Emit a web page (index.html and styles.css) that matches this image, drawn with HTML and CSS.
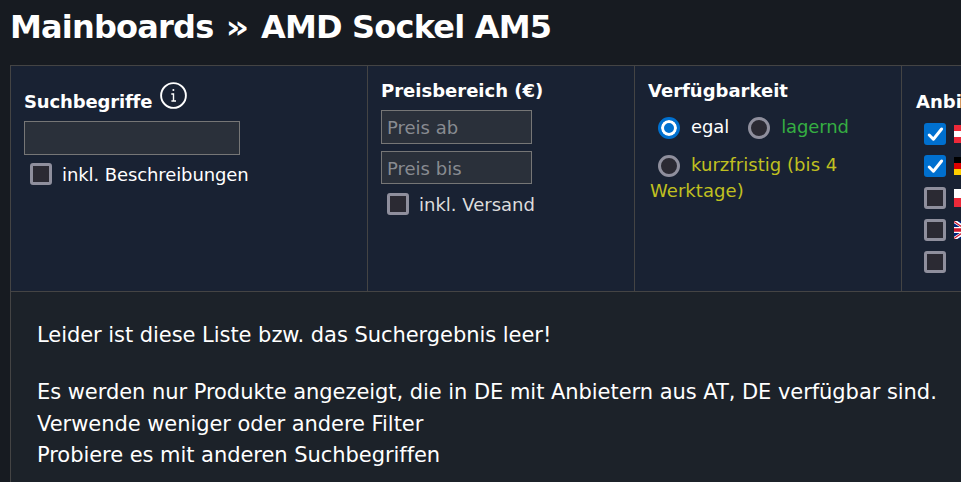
FILE: index.html
```html
<!DOCTYPE html>
<html lang="de">
<head>
    <meta charset="UTF-8">
    <meta name="viewport" content="width=device-width, initial-scale=1.0">
    <title>Mainboards » AMD Sockel AM5</title>
    <link rel="stylesheet" href="styles.css">
</head>
<body>
    <h1>Mainboards <span class="sep">»</span> AMD Sockel AM5</h1>
    <div id="list">
        <form id="filters">
            <div class="filter search">
                <h2>Suchbegriffe
                    <svg class="info" viewBox="0 0 27 27" width="27" height="27">
                        <circle cx="13.5" cy="13.5" r="12.4" fill="none" stroke="#fff" stroke-width="1.9"/>
                        <circle cx="13.4" cy="8" r="1" fill="#fff"/>
                        <path d="M11.3 12h2.2v6.7M11.4 19h4.6" fill="none" stroke="#fff" stroke-width="1.4"/>
                    </svg>
                </h2>
                <input type="text" class="field">
                <label class="row"><input type="checkbox"><span>inkl. Beschreibungen</span></label>
            </div>
            <div class="filter price">
                <h2>Preisbereich (€)</h2>
                <input type="text" class="field" placeholder="Preis ab">
                <input type="text" class="field" placeholder="Preis bis">
                <label class="row muted"><input type="checkbox"><span>inkl. Versand</span></label>
            </div>
            <div class="filter stock">
                <h2>Verfügbarkeit</h2>
                <div class="options">
                    <label class="any"><input type="radio" name="v" checked>egal</label>
                    <label class="green"><input type="radio" name="v">lagernd</label>
                </div>
                <label class="yellow"><input type="radio" name="v">kurzfristig (bis 4 Werktage)</label>
            </div>
            <div class="filter vendors">
                <h2>Anbieter</h2>
                <label class="country"><input type="checkbox" checked>
                    <svg class="flag" viewBox="0 0 27 18"><path fill="#ed2939" d="M0 0h27v18H0z"/><path fill="#fff" d="M0 6h27v6H0z"/></svg>
                </label>
                <label class="country"><input type="checkbox" checked>
                    <svg class="flag" viewBox="0 0 27 18"><path d="M0 0h27v6H0z"/><path fill="#d00" d="M0 6h27v6H0z"/><path fill="#ffce00" d="M0 12h27v6H0z"/></svg>
                </label>
                <label class="country"><input type="checkbox">
                    <svg class="flag" viewBox="0 0 27 18"><path fill="#fff" d="M0 0h27v9H0z"/><path fill="#ed2939" d="M0 9h27v9H0z"/></svg>
                </label>
                <label class="country"><input type="checkbox">
                    <svg class="flag" viewBox="0 0 27 18">
                        <path fill="#00247d" d="M0 0h27v18H0z"/>
                        <path stroke="#fff" stroke-width="3.6" d="M0 0l27 18M27 0L0 18"/>
                        <path stroke="#cf142b" stroke-width="1.2" d="M0 .6l27 18M27-.6L0 17.4"/>
                        <path stroke="#fff" stroke-width="6" d="M13.5 0v18M0 9h27"/>
                        <path stroke="#cf142b" stroke-width="3.6" d="M13.5 0v18M0 9h27"/>
                    </svg>
                </label>
                <label class="country"><input type="checkbox"></label>
            </div>
        </form>
        <div id="empty">
            <p>Leider ist diese Liste bzw. das Suchergebnis leer!</p>
            <p>Es werden nur Produkte angezeigt, die in DE mit Anbietern aus AT, DE verfügbar sind.<br>
            Verwende weniger oder andere Filter<br>
            Probiere es mit anderen Suchbegriffen</p>
        </div>
    </div>
</body>
</html>
```
FILE: styles.css
```css
* {
    box-sizing: border-box;
}

body {
    margin: 0;
    padding: 0 0 0 10px;
    height: 482px;
    overflow: hidden;
    background-color: #171b21;
    color: #fff;
    font-family: Verdana, "DejaVu Sans", sans-serif;
    font-size: 18px;
}

h1 {
    margin: 0;
    padding-top: 7px;
    height: 65px;
    font-size: 32px;
    line-height: 40px;
    letter-spacing: -0.8px;
    white-space: nowrap;
}

.sep {
    display: inline-block;
    margin: 0 4px 0 3px;
    transform: scaleX(1.15);
}

h2 {
    margin: 0;
    font-size: 18px;
    line-height: 26px;
    white-space: nowrap;
}

#list {
    height: 417px;
    border: 1px solid #444;
    border-width: 1px 0 0 1px;
    background-color: #1c2229;
    overflow: hidden;
}

#filters {
    display: grid;
    grid-template-columns: 357px 267px 267px 267px;
    width: 1158px;
    height: 226px;
    background-color: #192233;
    border-bottom: 1px solid #444;
}

.filter {
    padding: 12px 13px 0;
    border-right: 1px solid #444;
}

.field {
    display: block;
    width: 151px;
    height: 34px;
    padding: 1px 5px;
    border: 1px solid #767676;
    background-color: #2a303a;
    color: #fff;
    font: inherit;
}

.field::placeholder {
    color: #888b91;
}

.row {
    display: flex;
    align-items: center;
    gap: 10px;
    padding-left: 6px;
    line-height: 22px;
}

.row span {
    padding-top: 1px;
    line-height: 21px;
}

.muted {
    color: #ddd;
}

input[type="checkbox"],
input[type="radio"] {
    appearance: none;
    flex: none;
    width: 22px;
    height: 22px;
    margin: 0;
    border: 3px solid #8f8f9d;
    border-radius: 3px;
    background-color: #2b2a33;
}

input[type="checkbox"]:checked {
    border: 0;
    background: #0070cf url("data:image/svg+xml,%3Csvg xmlns='http://www.w3.org/2000/svg' viewBox='0 0 22 22'%3E%3Cpath d='M5.2 12l4.2 4.2L17.6 6' fill='none' stroke='white' stroke-width='3' stroke-linecap='round' stroke-linejoin='round'/%3E%3C/svg%3E") center / 22px no-repeat;
}

input[type="radio"] {
    border-radius: 50%;
}

input[type="radio"]:checked {
    border-color: #0070cf;
    background-color: #0070cf;
    box-shadow: inset 0 0 0 3px #fff;
}

.search {
    padding-top: 16px;
    letter-spacing: -0.1px;
}

.search h2 {
    display: flex;
    gap: 8px;
    height: 39px;
    line-height: 39px;
    letter-spacing: -0.15px;
}

.search .field {
    width: 216px;
}

.search .row {
    margin-top: 8px;
}

.price h2 {
    height: 32px;
}

.price .field + .field {
    height: 33px;
    margin-top: 7px;
    padding-top: 3px;
}

.price .row {
    margin-top: 9px;
}

.stock h2 {
    height: 36px;
}

.options {
    display: flex;
    gap: 19px;
    height: 38px;
    padding-left: 10px;
    letter-spacing: -0.1px;
}

.stock label {
    line-height: 26px;
}

.stock input {
    margin: 0 11px 0 0;
    vertical-align: -6px;
}

.yellow {
    display: block;
    padding-left: 2px;
    color: #c0c020;
    letter-spacing: 0.05px;
}

.stock .yellow input {
    margin-left: 8px;
}

.green {
    color: #35ae42;
}

.vendors {
    padding-top: 23px;
    padding-left: 14px;
}

.vendors h2 {
    height: 34px;
}

.country {
    display: flex;
    align-items: flex-start;
    gap: 8px;
    height: 32px;
    padding-left: 8px;
}

.flag {
    width: 27px;
    height: 18px;
    margin-top: 2px;
}

#empty {
    padding: 28px 26px;
    font-size: 21px;
    line-height: 31.5px;
    letter-spacing: -0.05px;
    white-space: nowrap;
}

#empty p {
    margin: 0 0 25.5px;
}
```
